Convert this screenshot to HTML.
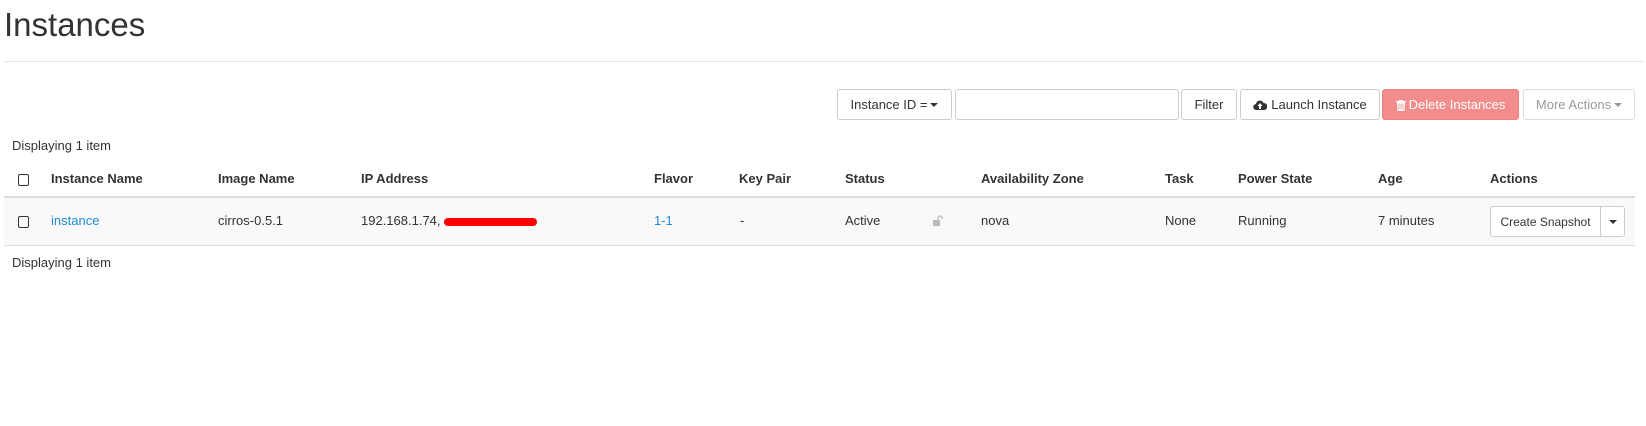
<!DOCTYPE html>
<html><head><style>
body{margin:0;font-family:"Liberation Sans",sans-serif;font-size:13px;color:#333;background:#fff;width:1646px;height:426px;position:relative;overflow:hidden}
.a{position:absolute;white-space:nowrap}
h1{position:absolute;left:4px;top:6px;margin:0;font-weight:400;font-size:33px;color:#333}
.hr{position:absolute;left:4px;right:3px;top:61px;height:1px;background:#e5e5e5}
.btn{position:absolute;top:89px;height:31px;border:1px solid #ccc;border-radius:3px;background:#fff;box-sizing:border-box;display:flex;align-items:center;justify-content:center;font-size:13px;color:#333}
.car{display:inline-block;width:0;height:0;border-left:4px solid transparent;border-right:4px solid transparent;border-top:4px solid currentColor;margin-left:3px}
.b{font-weight:bold}
.cb{position:absolute;width:9px;height:10px;border:1.3px solid #333;border-radius:2px}
a{color:#1f8dd6;text-decoration:none}
</style></head><body>
<h1>Instances</h1>
<div class="hr"></div>
<div class="btn" style="left:837px;width:115px">Instance ID =<span class="car"></span></div>
<div class="btn" style="left:955px;width:224px"></div>
<div class="btn" style="left:1181px;width:56px">Filter</div>
<div class="btn" style="left:1240px;width:140px"><svg width="14" height="12" viewBox="0 0 14 12" style="margin-right:4px"><path d="M3.5 11a3 3 0 0 1-.5-6 4 4 0 0 1 7.6-1A3.5 3.5 0 0 1 11 11z" fill="#333"/><path d="M7 4l-2.5 3H6v3h2V7h1.5z" fill="#fff"/></svg>Launch Instance</div>
<div class="btn" style="left:1382px;width:137px;background:#f38c8c;border-color:#f08080;color:#fff"><svg width="10" height="12" viewBox="0 0 10 12" style="margin-right:3px"><path d="M0 2h10v1H0zM3 1h4v1H3zM1 3h8l-.5 9h-7z" fill="#fff"/><path d="M3 4.5v6M5 4.5v6M7 4.5v6" stroke="#f38c8c" stroke-width=".8"/></svg>Delete Instances</div>
<div class="btn" style="left:1523px;width:112px;color:#999;border-color:#ddd">More Actions<span class="car"></span></div>
<div class="a" style="left:12px;top:138px">Displaying 1 item</div>
<div style="position:absolute;left:4px;width:1631px;top:196px;height:2px;background:#ddd"></div>
<div style="position:absolute;left:4px;width:1631px;top:198px;height:47px;background:#f9f9f9;border-bottom:1px solid #ddd"></div>
<div class="cb" style="left:18px;top:174px"></div>
<div class="a b" style="left:51px;top:171px">Instance Name</div>
<div class="a b" style="left:218px;top:171px">Image Name</div>
<div class="a b" style="left:361px;top:171px">IP Address</div>
<div class="a b" style="left:654px;top:171px">Flavor</div>
<div class="a b" style="left:739px;top:171px">Key Pair</div>
<div class="a b" style="left:845px;top:171px">Status</div>
<div class="a b" style="left:981px;top:171px">Availability Zone</div>
<div class="a b" style="left:1165px;top:171px">Task</div>
<div class="a b" style="left:1238px;top:171px">Power State</div>
<div class="a b" style="left:1378px;top:171px">Age</div>
<div class="a b" style="left:1490px;top:171px">Actions</div>
<div class="cb" style="left:18px;top:216px"></div>
<div class="a" style="left:51px;top:213px"><a>instance</a></div>
<div class="a" style="left:218px;top:213px">cirros-0.5.1</div>
<div class="a" style="left:361px;top:213px">192.168.1.74, <span style="display:inline-block;width:93px;height:8px;background:#f00;border-radius:4px;vertical-align:middle"></span></div>
<div class="a" style="left:654px;top:213px"><a>1-1</a></div>
<div class="a" style="left:740px;top:213px">-</div>
<div class="a" style="left:845px;top:213px">Active</div>
<svg class="a" style="left:933px;top:215px" width="12" height="12" viewBox="0 0 12 12"><rect x="0" y="5" width="7" height="6" fill="#bbb"/><path d="M5 5V3a2 2 0 0 1 4 0v1" stroke="#bbb" stroke-width="1.4" fill="none"/></svg>
<div class="a" style="left:981px;top:213px">nova</div>
<div class="a" style="left:1165px;top:213px">None</div>
<div class="a" style="left:1238px;top:213px">Running</div>
<div class="a" style="left:1378px;top:213px">7 minutes</div>
<div class="btn" style="left:1490px;top:206px;width:111px;height:31px;border-radius:3px 0 0 3px;font-size:12px">Create Snapshot</div>
<div class="btn" style="left:1600px;top:206px;width:25px;height:31px;border-radius:0 3px 3px 0"><span class="car" style="margin:0"></span></div>
<div class="a" style="left:12px;top:255px">Displaying 1 item</div>
</body></html>
